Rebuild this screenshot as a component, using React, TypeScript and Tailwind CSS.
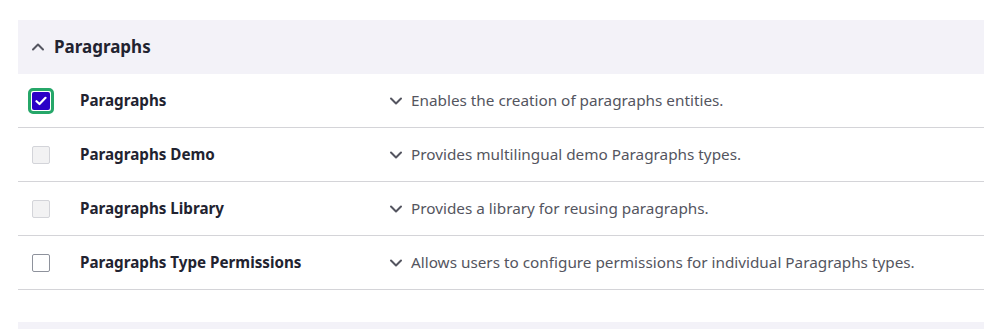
import { ChevronDown, ChevronUp } from "lucide-react";

type Mod = {
  name: string;
  desc: string;
  checked?: boolean;
  disabled?: boolean;
};

const modules: Mod[] = [
  { name: "Paragraphs", desc: "Enables the creation of paragraphs entities.", checked: true },
  { name: "Paragraphs Demo", desc: "Provides multilingual demo Paragraphs types.", disabled: true },
  { name: "Paragraphs Library", desc: "Provides a library for reusing paragraphs.", disabled: true },
  { name: "Paragraphs Type Permissions", desc: "Allows users to configure permissions for individual Paragraphs types." },
];

const Box = ({ mod }: { mod: Mod }) => {
  if (mod.checked) {
    return (
      <div className="w-[26px] h-[26px] -m-[4px] rounded-[5px] border-[3px] border-[#26a769] p-px flex items-center justify-center">
        <div className="w-[18px] h-[18px] shrink-0 rounded-[2px] bg-[#2a00c7] flex items-center justify-center">
          <svg width="12" height="10" viewBox="0 0 12 10">
            <path d="M1.5 5.2 L4.5 8 L10.5 1.8" stroke="#fff" strokeWidth="2.2" fill="none" strokeLinecap="round" strokeLinejoin="round" />
          </svg>
        </div>
      </div>
    );
  }
  return (
    <div
      className={`w-[18px] h-[18px] rounded-[2px] border ${
        mod.disabled ? "bg-[#f2f2f3] border-[#d3d4d9]" : "bg-white border-[#8e929c]"
      }`}
    />
  );
};

export default function App() {
  return (
    <div className="w-[984px] h-[329px] bg-white pt-5 pl-[18px] overflow-hidden" style={{ fontFamily: '"Noto Sans", sans-serif' }}>
      <div className="bg-[#f3f2f8] h-[54px] flex items-center pl-[10px] gap-[6px]">
        <ChevronUp size={20} strokeWidth={2.4} className="text-[#545560]" />
        <span className="text-[17px] font-bold text-[#222330]">Paragraphs</span>
      </div>
      <div>
        {modules.map((m) => (
          <div key={m.name} className="h-[54px] flex items-center border-b border-[#d4d4d8]">
            <div className="w-[62px] pl-[14px] flex">
              <Box mod={m} />
            </div>
            <div className="w-[306px] text-[15.2px] font-bold text-[#222330]">{m.name}</div>
            <div className="flex items-center gap-[5px] text-[15.3px] text-[#545560]">
              <ChevronDown size={20} strokeWidth={2.4} className="text-[#545560]" />
              <span>{m.desc}</span>
            </div>
          </div>
        ))}
      </div>
      <div className="mt-[32px] h-[20px] bg-[#f3f2f8]" />
    </div>
  );
}
